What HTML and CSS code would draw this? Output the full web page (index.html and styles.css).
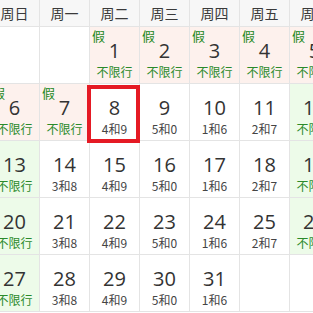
FILE: index.html
```html
<!DOCTYPE html>
<html lang="zh-CN">
<head>
  <meta charset="UTF-8">
  <meta name="viewport" content="width=device-width, initial-scale=1.0">
  <title>十月限行日历</title>
  <link rel="stylesheet" href="styles.css">
</head>
<body>

  <div class="calendar">
    <!-- Weekday header -->
    <div class="week-head">
      <span>周日</span><span>周一</span><span>周二</span><span>周三</span><span>周四</span><span>周五</span><span>周六</span>
    </div>

    <div class="days">
      <!-- Week 1 -->
      <div class="day empty"></div>
      <div class="day empty"></div>
      <div class="day holiday"><i class="tag">假</i><b>1</b><small>不限行</small></div>
      <div class="day holiday"><i class="tag">假</i><b>2</b><small>不限行</small></div>
      <div class="day holiday"><i class="tag">假</i><b>3</b><small>不限行</small></div>
      <div class="day holiday"><i class="tag">假</i><b>4</b><small>不限行</small></div>
      <div class="day holiday"><i class="tag">假</i><b>5</b><small>不限行</small></div>

      <!-- Week 2 -->
      <div class="day holiday"><i class="tag">假</i><b>6</b><small>不限行</small></div>
      <div class="day holiday"><i class="tag">假</i><b>7</b><small>不限行</small></div>
      <div class="day today"><b>8</b><small>4和9</small></div>
      <div class="day"><b>9</b><small>5和0</small></div>
      <div class="day"><b>10</b><small>1和6</small></div>
      <div class="day"><b>11</b><small>2和7</small></div>
      <div class="day weekend"><b>12</b><small>不限行</small></div>

      <!-- Week 3 -->
      <div class="day weekend"><b>13</b><small>不限行</small></div>
      <div class="day"><b>14</b><small>3和8</small></div>
      <div class="day"><b>15</b><small>4和9</small></div>
      <div class="day"><b>16</b><small>5和0</small></div>
      <div class="day"><b>17</b><small>1和6</small></div>
      <div class="day"><b>18</b><small>2和7</small></div>
      <div class="day weekend"><b>19</b><small>不限行</small></div>

      <!-- Week 4 -->
      <div class="day weekend"><b>20</b><small>不限行</small></div>
      <div class="day"><b>21</b><small>3和8</small></div>
      <div class="day"><b>22</b><small>4和9</small></div>
      <div class="day"><b>23</b><small>5和0</small></div>
      <div class="day"><b>24</b><small>1和6</small></div>
      <div class="day"><b>25</b><small>2和7</small></div>
      <div class="day weekend"><b>26</b><small>不限行</small></div>

      <!-- Week 5 -->
      <div class="day weekend"><b>27</b><small>不限行</small></div>
      <div class="day"><b>28</b><small>3和8</small></div>
      <div class="day"><b>29</b><small>4和9</small></div>
      <div class="day"><b>30</b><small>5和0</small></div>
      <div class="day"><b>31</b><small>1和6</small></div>
      <div class="day empty"></div>
      <div class="day empty"></div>
    </div>
  </div>

</body>
</html>
```

FILE: styles.css
```css
body {
  margin: 0;
  overflow: hidden;
  background: #fff;
  font-family: "Noto Sans CJK SC", "Noto Sans", sans-serif;
  color: #333;
}

.calendar {
  width: 350px;
  margin-left: -10px;
}

/* Weekday header */
.week-head {
  display: grid;
  grid-template-columns: repeat(7, 50px);
  height: 26px;
  background: #f7f7f7;
  border-bottom: 1px solid #e4e4e4;
}
.week-head span {
  border-right: 1px solid #e4e4e4;
  font-size: 14px;
  line-height: 26px;
  text-align: center;
  color: #3a3a3a;
}

/* Day grid */
.days {
  display: grid;
  grid-template-columns: repeat(7, 50px);
  grid-auto-rows: 57px;
}

.day {
  position: relative;
  display: flex;
  flex-direction: column;
  align-items: center;
  padding-top: 11px;
  border-right: 1px solid #e4e4e4;
  border-bottom: 1px solid #e4e4e4;
  box-sizing: border-box;
}
.day b {
  font-family: "Open Sans", "Noto Sans", sans-serif;
  font-weight: 400;
  font-size: 20px;
  line-height: 26px;
  color: #333;
}
.day small {
  margin-top: 0;
  font-size: 12px;
  line-height: 16px;
  color: #444;
}

.day.holiday { background: #fdf1ed; }
.day.weekend { background: #edfbe9; }
.day.holiday small,
.day.weekend small { color: #2b8a2b; }

/* "假" badge in the corner */
.tag {
  position: absolute;
  top: 1px;
  left: 2px;
  font-style: normal;
  font-size: 13px;
  line-height: 16px;
  color: #228822;
}

/* Selected day frame */
.day.today::after {
  content: "";
  position: absolute;
  top: 1px;
  left: -3px;
  right: -1px;
  bottom: -3px;
  border: 4px solid #e51a24;
  z-index: 1;
}
```
